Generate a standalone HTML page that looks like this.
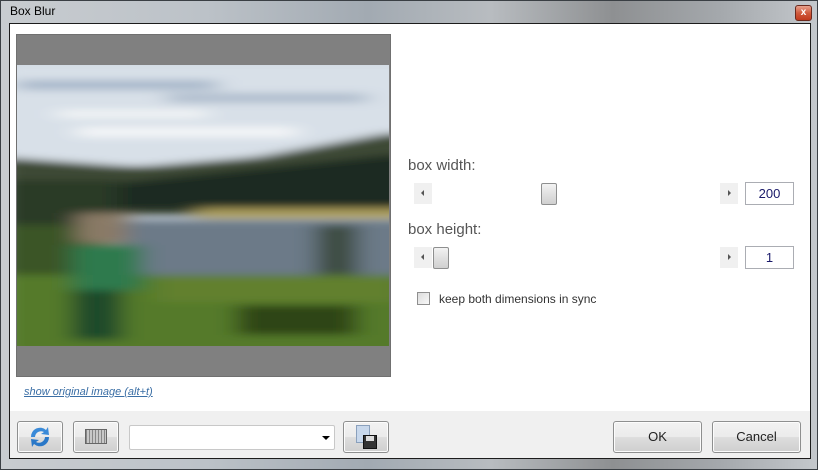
<!DOCTYPE html>
<html><head><style>
*{margin:0;padding:0;box-sizing:border-box}
body{width:818px;height:470px;overflow:hidden;position:relative;font-family:"Liberation Sans",sans-serif;background:#8a9096}
.abs{position:absolute}
.frame{left:0;top:0;width:818px;height:470px;border:1px solid #3a3f44;background:linear-gradient(90deg,#c8ccd0 0%,#bcc2c8 25%,#a2aab2 45%,#b8bcc0 60%,#8e9092 75%,#a4a8ac 88%,#c4c8cc 100%)}
.content{left:9px;top:23px;width:802px;height:436px;border:1px solid #1c1c1c;background:#fff}
.bar{left:10px;top:411px;width:800px;height:47px;background:#f0f0f0}
.btn{border:1px solid #8e8f8f;border-radius:3px;background:linear-gradient(#f2f2f2 0%,#ebebeb 50%,#dddddd 51%,#cfcfcf 100%);box-shadow:inset 0 0 0 1px #fcfcfc}
.arr{background:#f0f0f0;width:18px;height:21px}
.thumb{width:16px;height:22px;border:1px solid #8e8f8f;border-radius:2px;background:linear-gradient(#f3f3f3,#e0e0e0 50%,#d0d0d0)}
.tb{border:1px solid #abadb3;background:#fff;color:#1a1a6a;font-size:13px;text-align:center;line-height:21px;width:49px;height:23px}
.lbl{font-size:15px;color:#555}
</style></head><body>
<div class="abs frame"></div>
<div class="abs" style="left:10px;top:4px;font-size:12px;color:#000">Box Blur</div>
<div class="abs" style="left:795px;top:5px;width:17px;height:16px;border:1px solid #6b2a1e;border-radius:3px;background:linear-gradient(#e8a28e,#d05a3c 50%,#c0391c);color:#fff;font-size:10px;font-weight:bold;text-align:center;line-height:14px">x</div>
<div class="abs content"></div>
<div class="abs" style="left:16px;top:34px;width:375px;height:343px;background:#808080;border:1px solid #707070"></div>
<svg class="abs" style="left:17px;top:65px" width="372" height="281" viewBox="0 0 372 281">
<defs><filter id="b" x="-20%" y="-20%" width="140%" height="140%"><feGaussianBlur stdDeviation="12 4"/></filter>
<clipPath id="c"><rect width="372" height="281"/></clipPath></defs>
<g clip-path="url(#c)">
<rect width="372" height="281" fill="#d0d8e2"/>
<g filter="url(#b)">
<rect x="-20" y="0" width="420" height="100" fill="#d8e0e8"/>
<rect x="0" y="15" width="200" height="10" fill="#a8b8ca"/>
<rect x="150" y="28" width="200" height="10" fill="#b0bece"/>
<rect x="40" y="45" width="150" height="8" fill="#f2f4f6"/>
<rect x="60" y="62" width="220" height="10" fill="#f4f6f8"/>
<path d="M-20 92 L120 102 L240 92 L372 68 L400 68 L400 150 L-20 150Z" fill="#3c4a36"/>
<path d="M100 118 L372 90 L400 90 L400 145 L60 145Z" fill="#1e2a22"/>
<rect x="-20" y="115" width="120" height="55" fill="#2a3a26"/>
<rect x="180" y="143" width="220" height="10" fill="#a89a58"/>
<rect x="100" y="155" width="300" height="68" fill="#6c7a88"/>
<rect x="300" y="160" width="40" height="60" fill="#3a4a3c"/>
<rect x="-20" y="210" width="420" height="80" fill="#557a2a"/>
<rect x="140" y="212" width="240" height="25" fill="#62802e"/>
<rect x="220" y="240" width="120" height="30" fill="#2e4418"/>
<rect x="-20" y="160" width="110" height="50" fill="#3a5426"/>
<rect x="60" y="148" width="50" height="30" fill="#8a7a66"/>
<rect x="55" y="180" width="70" height="45" fill="#2e7a4e"/>
<rect x="55" y="225" width="50" height="50" fill="#1c4a2a"/>
</g></g>
</svg>
<div class="abs" style="left:24px;top:386px;font-size:11px;font-style:italic;color:#3a6ea5;text-decoration:underline">show original image (alt+t)</div>

<div class="abs lbl" style="left:408px;top:157px">box width:</div>
<div class="abs arr" style="left:414px;top:183px"></div>
<div class="abs" style="left:421px;top:190px;border:3px solid transparent;border-right:3px solid #555;border-left:0"></div>
<div class="abs thumb" style="left:541px;top:183px"></div>
<div class="abs arr" style="left:720px;top:183px"></div>
<div class="abs" style="left:728px;top:190px;border:3px solid transparent;border-left:3px solid #555;border-right:0"></div>
<div class="abs tb" style="left:745px;top:182px">200</div>

<div class="abs lbl" style="left:408px;top:221px">box height:</div>
<div class="abs arr" style="left:414px;top:247px"></div>
<div class="abs" style="left:421px;top:254px;border:3px solid transparent;border-right:3px solid #555;border-left:0"></div>
<div class="abs thumb" style="left:433px;top:247px"></div>
<div class="abs arr" style="left:720px;top:247px"></div>
<div class="abs" style="left:728px;top:254px;border:3px solid transparent;border-left:3px solid #555;border-right:0"></div>
<div class="abs tb" style="left:745px;top:246px">1</div>

<div class="abs" style="left:417px;top:292px;width:13px;height:13px;border:1px solid #8f8f8f;background:linear-gradient(135deg,#dcdcdc,#f8f8f8)"></div>
<div class="abs" style="left:439px;top:292px;font-size:12px;color:#333">keep both dimensions in sync</div>

<div class="abs bar"></div>
<div class="abs btn" style="left:17px;top:421px;width:46px;height:32px"></div>
<svg class="abs" style="left:27px;top:424px" width="26" height="26" viewBox="0 0 26 26">
<path d="M4 13 A9 9 0 0 1 19 6 L21 3 L22 11 L14 10 L17 8 A6 6 0 0 0 8 13Z" fill="#3a8ad8"/>
<path d="M22 13 A9 9 0 0 1 7 20 L5 23 L4 15 L12 16 L9 18 A6 6 0 0 0 18 13Z" fill="#2a78c8"/>
</svg>
<div class="abs btn" style="left:73px;top:421px;width:46px;height:32px"></div>
<div class="abs" style="left:85px;top:429px;width:22px;height:15px;border:1px solid #666;background:repeating-linear-gradient(90deg,#888 0 1px,#c8c8c8 1px 3px)"></div>
<div class="abs" style="left:129px;top:425px;width:206px;height:25px;border:1px solid #c8c8c8;border-radius:2px;background:#fff"></div>
<div class="abs" style="left:322px;top:436px;border:4px solid transparent;border-top:4px solid #000;border-bottom:0"></div>
<div class="abs btn" style="left:343px;top:421px;width:46px;height:32px"></div>
<div class="abs" style="left:356px;top:425px;width:14px;height:18px;background:#c8d8ec;border:1px solid #8aa0bc"></div>
<div class="abs" style="left:363px;top:435px;width:14px;height:14px;background:#333;border:1px solid #111"></div>
<div class="abs" style="left:366px;top:436px;width:8px;height:5px;background:#ddd"></div>
<div class="abs btn" style="left:613px;top:421px;width:89px;height:32px;font-size:13px;text-align:center;line-height:30px;color:#222">OK</div>
<div class="abs btn" style="left:712px;top:421px;width:89px;height:32px;font-size:13px;text-align:center;line-height:30px;color:#222">Cancel</div>
</body></html>
